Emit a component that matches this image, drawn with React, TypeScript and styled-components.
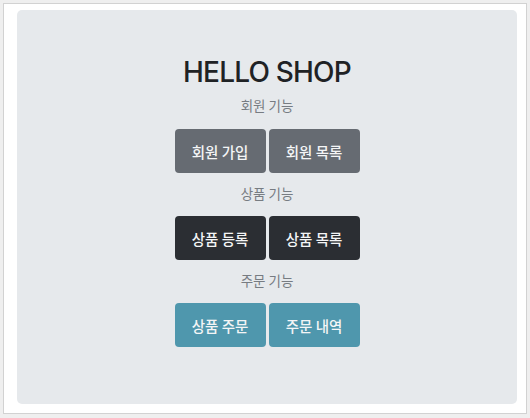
import styled, { createGlobalStyle } from "styled-components";

const GlobalStyle = createGlobalStyle`
  html, body {
    margin: 0;
    padding: 0;
    background: #efefef;
  }
  body {
    font-family: "Inter", "Noto Sans CJK KR", sans-serif;
  }
`;

type Variant = "secondary" | "dark" | "info";

const variantColors: Record<Variant, string> = {
  secondary: "#666b72",
  dark: "#2b2e33",
  info: "#4f97ad",
};

const sections: { title: string; variant: Variant; buttons: string[] }[] = [
  { title: "회원 기능", variant: "secondary", buttons: ["회원 가입", "회원 목록"] },
  { title: "상품 기능", variant: "dark", buttons: ["상품 등록", "상품 목록"] },
  { title: "주문 기능", variant: "info", buttons: ["상품 주문", "주문 내역"] },
];

export default function App() {
  return (
    <>
      <GlobalStyle />
      <Frame>
        <Jumbotron>
          <Title>HELLO SHOP</Title>
          {sections.map((s) => (
            <Section key={s.title}>
              <Label>{s.title}</Label>
              <ButtonRow>
                {s.buttons.map((b) => (
                  <ActionButton key={b} type="button" $variant={s.variant}>
                    {b}
                  </ActionButton>
                ))}
              </ButtonRow>
            </Section>
          ))}
        </Jumbotron>
      </Frame>
    </>
  );
}

const Frame = styled.div`
  box-sizing: border-box;
  margin: 3px 3px 4px 3px;
  width: 524px;
  height: 411px;
  background: #ffffff;
  border: 1px solid #d2d2d2;
  padding: 6px 9px 9px 13px;
  display: flex;
`;

const Jumbotron = styled.div`
  flex: 1;
  background: #e6e9ec;
  border-radius: 5px;
  padding-top: 45px;
  display: flex;
  flex-direction: column;
  align-items: center;
`;

const Title = styled.h1`
  margin: 0;
  height: 34px;
  line-height: 34px;
  font-family: "Inter", "Liberation Sans", sans-serif;
  font-size: 28px;
  font-weight: 500;
  letter-spacing: -0.8px;
  color: #1f2225;
`;

const Section = styled.div`
  display: flex;
  flex-direction: column;
  align-items: center;
`;

const Label = styled.div`
  margin: 6px 0 13px;
  height: 21px;
  line-height: 21px;
  font-family: "Noto Sans CJK KR", sans-serif;
  font-size: 13.5px;
  color: #777c82;

  ${Section} + ${Section} & {
    margin: 10px 0 12px;
  }
`;

const ButtonRow = styled.div`
  display: flex;
  gap: 3px;
`;

const ActionButton = styled.button<{ $variant: Variant }>`
  width: 91px;
  height: 44px;
  border: none;
  border-radius: 4px;
  background: ${({ $variant }) => variantColors[$variant]};
  color: #f4f5f6;
  font-family: "Noto Sans CJK KR", sans-serif;
  font-size: 14.5px;
  font-weight: 500;
  padding: 0;
  cursor: pointer;
`;
